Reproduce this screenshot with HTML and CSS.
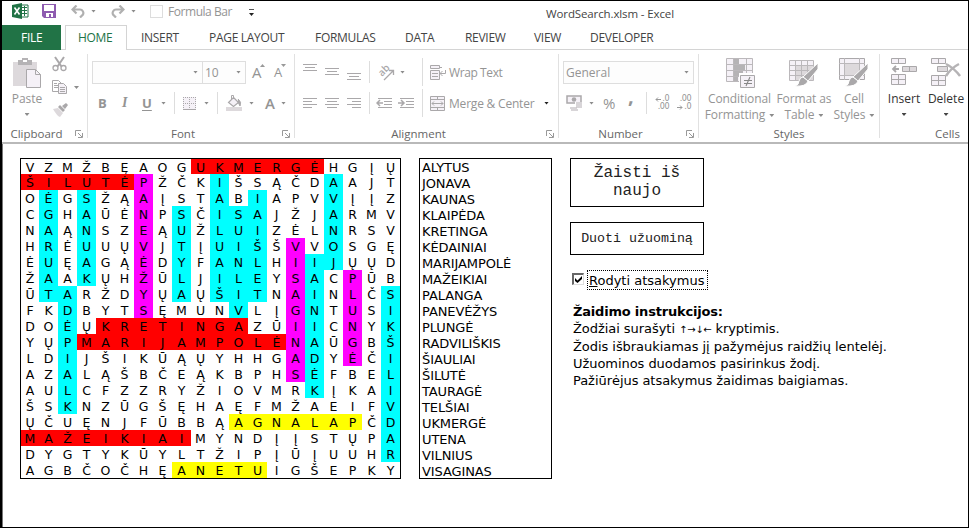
FILE: index.html
```html
<!DOCTYPE html>
<html lang="lt">
<head>
<meta charset="utf-8">
<title>WordSearch.xlsm - Excel</title>
<link rel="stylesheet" href="styles.css">
</head>
<body>
<div class="window">
  <header class="titlebar">
    <svg class="logo" width="17" height="16" viewBox="0 0 17 16"><path d="M9 2h7v12H9z" fill="#fff" stroke="#217346"/><path d="M10 4.5h5M10 7.5h5M10 10.5h5M12.5 3v10" stroke="#217346"/><path d="M0 2l10-2v16L0 14z" fill="#217346"/><path d="M2.5 4.5l5 7M7.500 4.500l-5 7" stroke="#fff" stroke-width="1.600"/></svg>
    <svg class="save" width="14" height="14" viewBox="0 0 14 14"><path d="M0 0h14v14H2l-2-2z" fill="#8e5bb0"/><path d="M2 1h10v6H2zM4 9h7v4H9v-3H7v3H4z" fill="#fff"/></svg>
    <svg class="undo" width="14" height="13" viewBox="0 0 14 13"><path d="M5.500.500L1.500 4.500l4 4M2 4.500H9a3.500 3.500 0 0 1 3 5L9 12.500" fill="none" stroke="#b0b0b0" stroke-width="2.200"/></svg>
    <i class="caret light"></i>
    <svg class="redo" width="14" height="13" viewBox="0 0 14 13"><path d="M8.500.500l4 4-4 4M12 4.500H5a3.500 3.500 0 0 0-3 5L5 12.500" fill="none" stroke="#b0b0b0" stroke-width="2.200"/></svg>
    <i class="caret light"></i>
    <span class="qa-box"></span>
    <span class="qa-label">Formula Bar</span>
    <span class="customize"><i class="caret dark"></i></span>
    <span class="doc-title">WordSearch.xlsm - Excel</span>
  </header>
  <nav class="tabs">
    <span class="tab file">FILE</span>
    <span class="tab home">HOME</span>
    <span class="tab t-insert">INSERT</span>
    <span class="tab t-layout">PAGE LAYOUT</span>
    <span class="tab t-formulas">FORMULAS</span>
    <span class="tab t-data">DATA</span>
    <span class="tab t-review">REVIEW</span>
    <span class="tab t-view">VIEW</span>
    <span class="tab t-dev">DEVELOPER</span>
  </nav>
  <section class="ribbon">
    <div class="group clipboard">
      <div class="body">
        <div class="big paste">
          <svg width="30" height="32" viewBox="0 0 30 32"><path d="M1 4h24v24H1z" fill="#ddd9dc"/><path d="M6 2h4V0h6v2h4v5H6z" fill="#b5b3b5"/><path d="M11 2h4v2h-4z" fill="#fff"/><path d="M14.500 11.500h9l5 5v13h-14z" fill="#f5f1f7" stroke="#aaa8aa"/><path d="M23.500 11.500v5h5" fill="none" stroke="#aaa8aa"/></svg>
          <span>Paste</span><i class="caret light"></i>
        </div>
        <div class="stack">
          <svg width="16" height="16" viewBox="0 0 16 16"><path d="M3 1l6.500 9.500M12 1L5.500 10.500" stroke="#aaa8aa" stroke-width="2"/><circle cx="3.500" cy="12" r="2.500" fill="none" stroke="#aaa8aa" stroke-width="1.300"/><circle cx="11.500" cy="12" r="2.500" fill="none" stroke="#aaa8aa" stroke-width="1.300"/></svg>
          <div class="copy"><svg width="16" height="15" viewBox="0 0 16 15"><path d="M.5.500h6l3 3v8h-9z" fill="#fff" stroke="#aaa8aa"/><path d="M2 3.500h3M2 5.500h4M2 7.500h4" stroke="#aaa8aa"/><path d="M6.500 3.500h5l3 3v7h-8z" fill="#f5f1f7" stroke="#aaa8aa"/><path d="M8 7.500h5M8 9.500h5M8 11.500h5" stroke="#aaa8aa"/></svg><i class="caret light"></i></div>
          <svg width="17" height="15" viewBox="0 0 17 15"><path d="M1 6l5-1 5 5-3 4q-3-1-7-8z" fill="#ddd9dc"/><path d="M6 4l2-2 5 5-2 2zM10 3l4-3 2 2-3 4z" fill="#aaa8aa"/></svg>
        </div>
      </div>
      <div class="caption">Clipboard</div><svg class="launch" viewBox="0 0 8 8"><use href="#launcher"/></svg>
    </div>
    <div class="group font">
      <div class="body rows">
        <div class="row">
          <span class="select font-name"><i class="caret light"></i></span><span class="select font-size">10<i class="caret light"></i></span>
          <span class="grow">A</span><svg class="tick" width="5" height="3" viewBox="0 0 5 3"><path d="M0 3h5L2.500 0z" fill="#999"/></svg><span class="grow small">A</span><svg class="tick" width="5" height="3" viewBox="0 0 5 3"><path d="M0 0h5L2.500 3z" fill="#999"/></svg>
        </div>
        <div class="row second">
          <b class="bold">B</b><i class="italic">I</i><b class="under">U</b><i class="caret light"></i><i class="sep"></i>
          <svg class="border-icon" width="13" height="13" viewBox="0 0 13 13"><path fill="#f5f1f7" d="M0 0h13v13H0z"/><path d="M0 .5h13M0 6.500h13M.5 0v13M6.500 0v13M12.500 0v13" stroke="#aaa8aa" stroke-dasharray="1 1"/><path d="M0 12.500h13" stroke="#aaa8aa"/></svg><i class="caret light"></i><i class="sep"></i>
          <svg class="fill-icon" width="17" height="16" viewBox="0 0 17 16"><path d="M7.500 2.500l5 5-5 4-5-4z" fill="#f5f1f7" stroke="#aaa8aa" stroke-width="1.200"/><path d="M5.500 5V.5h2V4" fill="none" stroke="#aaa8aa"/><path d="M12 4q4 3 2 7l-2-4" fill="#aaa8aa" stroke="#aaa8aa"/><path d="M0 12h16v4H0z" fill="#ddd9dc"/></svg><i class="caret light"></i>
          <span class="color">A</span><i class="caret light"></i>
        </div>
      </div>
      <div class="caption">Font</div><svg class="launch" viewBox="0 0 8 8"><use href="#launcher"/></svg>
    </div>
    <div class="group alignment">
      <div class="body rows">
        <div class="row">
          <svg class="lines" width="60" height="20" viewBox="0 0 60 20"><path d="M0 2.500h14M2 5.500h10M0 8.500h14M22 6.500h14M24 9.500h10M22 12.500h14M44 11.500h14M46 14.500h10M44 17.500h14" stroke="#aaa8aa"/></svg><i class="sep"></i>
          <svg class="orient" width="18" height="17" viewBox="0 0 18 17"><text x="1" y="10" transform="rotate(-45 6 8)" class="ab">ab</text><path d="M6 16l9-9M11 6.500h4.500V11" fill="none" stroke="#aaa8aa" stroke-width="1.300"/></svg><i class="caret light"></i><i class="sep tall"></i>
          <svg class="wrap-icon" width="17" height="15" viewBox="0 0 17 15"><path d="M.5.500h9v3h-9zM.5 5.500h9v9h-9z" fill="#f5f1f7" stroke="#aaa8aa"/><path d="M9 2.500h3M2 8.500h6M2 11.500h6M15.500 5v3.500H10M12.500 6L10 8.500l2.500 2.500" fill="none" stroke="#aaa8aa"/></svg><span class="label">Wrap Text</span>
        </div>
        <div class="row second">
          <svg class="lines" width="60" height="12" viewBox="0 0 60 12"><path d="M0 1.500h14M0 4.500h9M0 7.500h14M0 10.500h9M22 1.500h14M24 4.500h10M22 7.500h14M24 10.500h10M44 1.500h14M49 4.500h9M44 7.500h14M49 10.500h9" stroke="#aaa8aa"/></svg><i class="sep"></i>
          <svg class="indent" width="39" height="12" viewBox="0 0 39 12"><path d="M2 1.500h14M8 4.500h8M8 7.500h8M2 10.500h14M24 1.500h14M30 4.500h8M30 7.500h8M24 10.500h14" stroke="#aaa8aa"/><path d="M7 6H1M4 3L1 6l3 3M22 6h6M25 3l3 3-3 3" fill="none" stroke="#aaa8aa" stroke-width="1.500"/></svg><i class="sep tall"></i>
          <svg class="merge-icon" width="15" height="15" viewBox="0 0 15 15"><path d="M.5.500h14v14H.5z" fill="#f5f1f7" stroke="#aaa8aa"/><path d="M0 3.500h15M0 11.500h15M7.500 0v4M7.500 11v4M2 7.500h11M4 5.500l-2 2 2 2M11 5.500l2 2-2 2" fill="none" stroke="#aaa8aa"/></svg><span class="label">Merge &amp; Center</span><i class="caret dark"></i>
        </div>
      </div>
      <div class="caption">Alignment</div><svg class="launch" viewBox="0 0 8 8"><use href="#launcher"/></svg>
    </div>
    <div class="group number">
      <div class="body rows">
        <div class="row"><span class="select general">General<i class="caret light"></i></span></div>
        <div class="row second">
          <svg class="money" width="17" height="16" viewBox="0 0 17 16"><path d="M1 1h14v7H1z" fill="#f5f1f7" stroke="#aaa8aa" stroke-width="1.500"/><circle cx="8" cy="4.500" r="2.300" fill="#aaa8aa"/><path d="M9 7h8v7H9z" fill="#fff"/><path d="M4 13h7M5 15h7M10 8h6M10 10h6M10 12h6" stroke="#ccc8cb" stroke-width="1.300"/></svg><i class="caret light"></i>
          <span class="percent">%</span><span class="comma">,</span><i class="sep"></i>
          <span class="dec"><span class="with-arrow"><svg width="6" height="5" viewBox="0 0 6 5"><path d="M6 2.500H1M3 .5l-2 2 2 2" fill="none" stroke="#999"/></svg>.0</span><span>.00</span></span><span class="dec two"><span>.00</span><span class="with-arrow"><svg width="6" height="5" viewBox="0 0 6 5"><path d="M0 2.500h5M3 .5l2 2-2 2" fill="none" stroke="#999"/></svg>.0</span></span>
        </div>
      </div>
      <div class="caption">Number</div><svg class="launch" viewBox="0 0 8 8"><use href="#launcher"/></svg>
    </div>
    <div class="group styles">
      <div class="body">
        <div class="big conditional"><svg width="30" height="30" viewBox="0 0 30 30"><path d="M.5.500h26v23H.5z" fill="#f5f1f7"/><path d="M8 1h5v5H8zM8 7h11v5H8zM8 13h9v5H8zM8 19h4v5H8z" fill="#b5b3b5"/><path d="M.5.500h26v23H.5zM0 6.500h27M0 12.500h27M0 18.500h27M7.500 0v24M20.500 0v24" fill="none" stroke="#bbb8bb"/><path d="M13 15h17v15H13z" fill="#fff"/><path d="M14.500 17.500h14v12h-14z" fill="#f5f1f7" stroke="#aaa8aa"/><path d="M18 22.500h8M18 25.500h8M24 19l-4 9" stroke="#888" stroke-width="1.100"/></svg><span>Conditional</span><span>Formatting<i class="caret light"></i></span></div>
        <div class="big format"><svg width="30" height="30" viewBox="0 0 30 30"><path d="M.5 2.500h24v20H.5z" fill="#f5f1f7"/><path d="M7 7h17v15H7z" fill="#ddd9dc"/><path d="M.5 2.500h24v20H.5zM0 7.500h25M0 12.500h25M0 17.500h25M6.500 2v21M12.500 2v21M18.500 2v21" fill="none" stroke="#bbb8bb"/><use href="#brush"/></svg><span>Format as</span><span>Table<i class="caret light"></i></span></div>
        <div class="big cell"><svg width="30" height="30" viewBox="0 0 30 30"><path d="M.5.500h25v21H.5z" fill="#f5f1f7" stroke="#aaa8aa"/><path d="M5 5h15v12H5z" fill="#ddd9dc"/><path d="M5.500 0v22M20.500 0v22M0 5.500h26M0 17.500h26" stroke="#bbb8bb"/><use href="#brush"/></svg><span>Cell</span><span>Styles<i class="caret light"></i></span></div>
      </div>
      <div class="caption">Styles</div>
    </div>
    <div class="group cells">
      <div class="body">
        <div class="big insert"><svg width="27" height="30" viewBox="0 0 27 30"><path d="M.5.500h14v5H.5zM7.500 0v6M.5 16.500h14v10H.5zM0 21.500h15M7.500 16v11" fill="#f5f1f7" stroke="#aaa8aa"/><path d="M11.500 8.500h14v5h-14zM18.500 8v6" fill="#ddd9dc" stroke="#aaa8aa"/><path d="M8 11H2M5 8l-3 3 3 3" fill="none" stroke="#aaa8aa" stroke-width="1.800"/></svg><span>Insert</span><i class="caret mid"></i></div>
        <div class="big delete"><svg width="30" height="30" viewBox="0 0 30 30"><path d="M.5.500h14v5H.5zM7.500 0v6M.5 17.500h14v10H.5zM0 22.500h15M7.500 17v11" fill="#f5f1f7" stroke="#aaa8aa"/><path d="M6.500 8.500h10v5h-10z" fill="#ddd9dc" stroke="#aaa8aa"/><path d="M15 6q8 4 14 12M28 6q-8 4-13 12" fill="none" stroke="#b5b3b5" stroke-width="2.500"/></svg><span>Delete</span><i class="caret mid"></i></div>
      </div>
      <div class="caption">Cells</div>
    </div>
  </section>
  <main class="sheet">
    <div class="letters" id="letters"></div>
    <ul class="words"><li>ALYTUS</li><li>JONAVA</li><li>KAUNAS</li><li>KLAIPĖDA</li><li>KRETINGA</li><li>KĖDAINIAI</li><li>MARIJAMPOLĖ</li><li>MAŽEIKIAI</li><li>PALANGA</li><li>PANEVĖŽYS</li><li>PLUNGĖ</li><li>RADVILIŠKIS</li><li>ŠIAULIAI</li><li>ŠILUTĖ</li><li>TAURAGĖ</li><li>TELŠIAI</li><li>UKMERGĖ</li><li>UTENA</li><li>VILNIUS</li><li>VISAGINAS</li></ul>
    <aside class="panel">
      <button class="btn again">Žaisti iš<br>naujo</button>
      <button class="btn hint">Duoti užuominą</button>
      <label class="answers"><span class="check"><svg width="7" height="7" viewBox="0 0 7 7"><path d="M0 2l2.500 2.500L7 0v3L2.500 7 0 5z"/></svg></span><span class="focus"><u>R</u>odyti atsakymus</span></label>
      <div class="help">
        <b>Žaidimo instrukcijos:</b>
        <p class="p1">Žodžiai surašyti <span class="arrows">↑→↓←</span> kryptimis.</p>
        <p class="p2">Žodis išbraukiamas jį pažymėjus raidžių lentelėj.</p>
        <p class="p3">Užuominos duodamos pasirinkus žodį.</p>
        <p class="p4">Pažiūrėjus atsakymus žaidimas baigiamas.</p>
      </div>
    </aside>
  </main>
</div>
<svg class="defs" width="0" height="0"><defs>
  <g id="launcher"><path d="M.5 6V.5H6M3 3l4 4M7.500 3v4.500H3" fill="none" stroke="#999"/></g>
  <g id="brush"><path d="M29 5v6L19 23l-5-4z" fill="#aaa8aa" stroke="#fff"/><path d="M14 19l5 4q-2 6-13 5 4-1 4-5 1-4 4-4z" fill="#aaa8aa" stroke="#fff"/></g>
</defs></svg>
<script src="grid.js"></script>
</body>
</html>
```
FILE: styles.css
```css
* { box-sizing: border-box; }
body { margin: 0; background: #fff; }
.window { width: 969px; height: 528px; overflow: hidden; border: 1px solid #000; border-left-width: 2px; font: 12px "Open Sans", "Noto Sans", sans-serif; color: #444; }
svg { display: block; flex: none; }
.defs { position: absolute; }
.caret { width: 5px; height: 3px; flex: none; clip-path: polygon(0 0, 100% 0, 50% 100%); background: #222; display: inline-block; }
.caret.light { background: #8c8c8c; }
.caret.mid { background: #444; }

.titlebar { display: flex; align-items: center; height: 24px; padding: 0 0 4px 10px; white-space: nowrap; }
.save { margin-left: 13px; }
.undo { margin: 0 6px 0 15px; }
.redo { margin: 0 6px 0 15px; }
.qa-box { width: 13px; height: 13px; border: 1px solid #ddd; margin-left: 14px; }
.qa-label { margin: 1px 0 0 5px; width: 64px; color: #949494; letter-spacing: -.45px; }
.customize { border-top: 1px solid #555; padding-top: 3px; margin: 3px 0 0 17px; height: 7px; width: 5px; display: flex; }
.doc-title { margin: 4px 0 0 292px; font-size: 11.5px; letter-spacing: -.12px; }

.tabs { display: flex; height: 25px; line-height: 25px; border-bottom: 1px solid #d4d4d4; white-space: nowrap; letter-spacing: -.3px; }
.tab { flex: none; }
.file { width: 59px; height: 25px; background: #217346; color: #fff; padding-left: 19px; }
.home { width: 62px; height: 25px; margin-left: 4px; padding-left: 12px; background: #fff; border: 1px solid #d4d4d4; border-bottom: 0; color: #217346; line-height: 24px; }
.t-insert { margin-left: 14px; width: 68px; }
.t-layout { width: 106px; }
.t-formulas { width: 90px; }
.t-data { width: 60px; }
.t-review { width: 69px; }
.t-view { width: 56px; }

.ribbon { display: flex; height: 94px; border-bottom: 2px solid #b9b9b9; color: #949494; }
.group { position: relative; flex: none; height: 84px; margin-top: 4px; border-right: 1px solid #e1e1e1; }
.clipboard { width: 86px; }
.font { width: 207px; }
.alignment { width: 264px; }
.number { width: 140px; }
.styles { width: 181px; }
.cells { width: 88px; border: 0; }
.body { display: flex; height: 72px; }
.rows { flex-direction: column; }
.caption { text-align: center; line-height: 17px; font-size: 11.500px; color: #666; margin-top: -1px; }
.clipboard .caption { padding-right: 16px; }
.font .caption { padding-right: 16px; }
.alignment .caption { padding-right: 16px; }
.number .caption { padding-right: 16px; }
.cells .caption { padding-left: 47px; }
.launch { position: absolute; right: 4px; bottom: 0; width: 8px; height: 8px; }
.big { display: flex; flex-direction: column; align-items: center; line-height: 16px; white-space: nowrap; flex: none; padding-top: 4px; }
.big svg { margin-bottom: 3px; }
.big .caret { margin-left: 4px; vertical-align: 2px; }
.paste { width: 50px; }
.paste .caret, .cells .caret { margin: 6px 0 0; }
.paste svg { margin-bottom: 1px; }
.stack { display: flex; flex-direction: column; gap: 8px; padding-top: 2px; }
.copy { display: flex; gap: 6px; align-items: center; }
.row { display: flex; align-items: center; height: 36px; white-space: nowrap; }
.row.second { height: 26px; }
.select { display: flex; align-items: center; justify-content: space-between; border: 1px solid #dedede; height: 23px; background: #fdfdfd; padding: 0 4px 0 2px; }
.font-name { width: 111px; margin-left: 4px; justify-content: flex-end; }
.font-size { width: 44px; margin-left: -1px; }
.grow { margin-left: 6px; font-size: 15px; line-height: 20px; width: 9px; }
.grow.small { font-size: 13px; margin-left: 9px; width: 8px; }
.tick { margin: -13px 0 0 -1px; }
.bold { margin-left: 10px; width: 22px; font-size: 13px; }
.italic { width: 22px; font: italic bold 14px "Liberation Serif", serif; padding-left: 2px; }
.under { width: 19px; font-size: 13px; text-decoration: underline; text-underline-offset: 2px; }
.sep { width: 1px; height: 22px; background: #ddd; flex: none; }
.font .sep { margin: 0 8px; }
.font .border-icon + .caret { margin-left: 8px; }
.fill-icon + .caret { margin-left: 6px; }
.color { margin-left: 11px; width: 16px; font-size: 15px; font-weight: 600; }
.lines { margin-left: 8px; }
.alignment .sep { margin-left: 6px; }
.orient { margin: 0 4px 0 8px; overflow: visible; }
.ab { font: 600 10px "Open Sans", sans-serif; fill: #aaa8aa; }
.alignment .orient + .caret + .sep { margin-left: 17px; }
.indent { margin-left: 6px; }
.alignment .indent + .sep { margin-left: 7px; }
.sep.tall { height: 28px; }
.wrap-icon { margin: 0 2px 0 7px; }
.wrap-icon + .label { letter-spacing: -.4px; }
.merge-icon { margin: 0 4px 0 7px; }
.merge-icon + .label { width: 95px; letter-spacing: -.2px; }
.general { width: 131px; margin-left: 4px; }
.money { margin: 0 6px 0 7px; }
.percent { margin-left: 9px; font-size: 15px; width: 25px; }
.comma { font: bold 20px/10px "Open Sans", sans-serif; width: 18px; margin-top: -14px; }
.dec { display: flex; flex-direction: column; align-items: flex-end; font: 8px/8px "DejaVu Sans", sans-serif; letter-spacing: -.5px; width: 15px; margin-left: 7px; }
.dec.two { margin-left: 7px; }
.with-arrow { display: flex; align-items: center; gap: 1px; }
.conditional { width: 81px; }
.conditional svg { margin-left: 2px; }
.conditional, .format, .cell { letter-spacing: -.1px; }
.format { width: 48px; }
.cell { width: 52px; }
.cells { color: #333; }
.insert { width: 48px; }
.delete { width: 36px; }

.sheet { display: flex; align-items: flex-start; height: 383px; padding: 14px 0 0 17px; border-left: 1px solid #777; font: 13px "DejaVu Sans", sans-serif; color: #000; }
.letters { display: grid; grid-template: 15px repeat(19, 16px) / 18px repeat(19, 19px); border: 1px solid #000; line-height: 18px; text-align: center; flex: none; font-size: 12.500px; }
.r { background: #f00; }
.c { background: #0ff; }
.m { background: #f0f; }
.y { background: #ff0; }
.words { width: 133px; height: 321px; margin: 0 0 0 18px; padding: 1px 0 0 2px; border: 1px solid #000; list-style: none; line-height: 16px; letter-spacing: -.1px; flex: none; }
.panel { margin-left: 18px; width: 340px; flex: none; }
.btn { display: block; width: 134px; border: 1px solid #000; border-radius: 0; background: #fff; padding: 0; font-family: "Liberation Mono", monospace; color: #222; }
.again { height: 49px; font-size: 16px; line-height: 18px; padding-bottom: 2px; }
.hint { height: 33px; margin-top: 15px; font-size: 13.300px; }
.answers { display: flex; align-items: center; margin: 15px 0 0 2px; height: 20px; }
.check { width: 12px; height: 12px; border: 1px solid #666; border-width: 2px 1px 1px 2px; border-right-color: #ddd; border-bottom-color: #ddd; padding: 1px; margin-top: -2px; }
.focus { border: 1px dotted #000; height: 20px; line-height: 19px; width: 121px; margin-left: 3px; padding-left: 1px; white-space: nowrap; letter-spacing: 0; }
.help { margin: 13px 0 0 3px; line-height: 17.300px; white-space: nowrap; letter-spacing: -.05px; }
.help b { letter-spacing: -.2px; }
.help p { margin: 0; }
.arrows { font-size: 10px; line-height: 0; letter-spacing: -.3px; }
```
FILE: grid.js
```js
const rows = [
  ["VZMŽBĘAOGUKMERGĖHGĮŲ", ".........rrrrrrr...."],
  ["ŠILUTĖPŽČKIŠSĄČDAAJT", "rrrrrrm...c.....c..."],
  ["OĖGSŽĄAĮSTABIAPVVĮĮZ", ".c.c..m...c.c...c..."],
  ["CGHAŪĖNPSČISAJŽJARMV", ".c.c..m.c.ccc...c..."],
  ["NAĄNSZEĄUŽLUIZĖLNRSV", ".c.c..m.c.ccc...c..."],
  ["HRĖUUŲVJTĮUIŠŠVVOSGĘ", ".c.c..m.c.ccc.m.c..."],
  ["ĖUĘAGĄĖDYFANLHIIJŲŲD", ".c.c..m.c.ccc.mcc..."],
  ["ŽAAKŲHŽŪLJILEYSACPŪB", ".c.c..m.c.ccc.mc.m.."],
  ["ŪTARŽDYŲAŲŠITNAINLČS", ".cc...m.c.ccc.mc.m.c"],
  ["FKDBYTSĘMUNVLĮGNTUSI", "..c...m....c..mc.m.c"],
  ["DOĖŲKRETINGAZŪIICNYK", "..c.rrrrrrrr..mc.m.c"],
  ["YŲPMARIJAMPOLĖNAŪGBŠ", "..crrrrrrrrrrrmc.m.c"],
  ["LDIJŠIKŪĄŲYHHGADYĖČI", "..c...........mc.m.c"],
  ["AZALĄŠBČEĄKBPHSĖFBEL", "..c...........mc...c"],
  ["AULCFZZRYŽIOVMRKĮKAI", "..c............c...c"],
  ["ŠSKNZŪGŠĘHAĘFMŽAEIFV", "..c................c"],
  ["ŲČUĘNJFŪBBĄAGNALAPČD", "...........yyyyyyy.c"],
  ["MAŽEIKIAIMYNDĮĮSTŲPA", "rrrrrrrrr..........c"],
  ["DYGTYKŪYLTŽIPĮŪĮUUHR", "...................c"],
  ["AGBČOČHĘANETUIGŠEPKY", "........yyyyy......."]
];
const grid = document.getElementById("letters");
for (const [text, marks] of rows) {
  [...text].forEach((letter, i) => {
    const cell = document.createElement("span");
    cell.textContent = letter;
    if (marks[i] !== ".") cell.className = marks[i];
    grid.append(cell);
  });
}
```
